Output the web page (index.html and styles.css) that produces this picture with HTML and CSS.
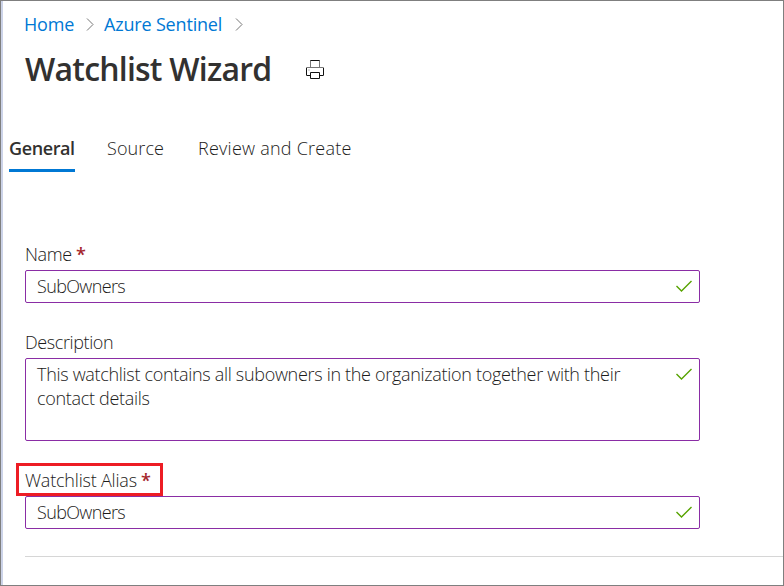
FILE: index.html
```html
<!DOCTYPE html>
<html lang="en">
<head>
<meta charset="utf-8">
<title>Watchlist Wizard</title>
<link rel="stylesheet" href="styles.css">
</head>
<body>
<main class="blade">
  <nav class="breadcrumb">
    <a class="crumb-home">Home</a>
    <svg class="chevron" width="8" height="13" viewBox="0 0 8 13"><path d="M1 .5 7 6.5 1 12.5"/></svg>
    <a class="crumb-sentinel">Azure Sentinel</a>
    <svg class="chevron" width="8" height="13" viewBox="0 0 8 13"><path d="M1 .5 7 6.5 1 12.5"/></svg>
  </nav>
  <header class="heading">
    <h1>Watchlist Wizard</h1>
    <svg class="printer" width="18" height="19" viewBox="0 0 18 19"><path class="soft" d="M4.500 7.500V.5h9v7M.5 15.500v-8h17v8"/><path d="M4.500.5h9M4.500 15.500h-4M17.500 15.500h-4M4.500 12.500h9v6h-9zM17.500 8v7M.5 8v7"/><path class="soft" d="M2.500 10h1"/></svg>
  </header>
  <div class="tabs">
    <a class="tab active">General</a>
    <a class="tab source">Source</a>
    <a class="tab review">Review and Create</a>
  </div>
  <form class="form">
    <div class="field">
      <div class="label"><span class="name">Name</span><b>*</b></div>
      <div class="box"><span class="value">SubOwners</span><svg class="check" width="16" height="12" viewBox="0 0 16 12"><path d="M.5 6 5.500 11 15.500 1"/></svg></div>
    </div>
    <div class="field">
      <div class="label"><span class="description">Description</span></div>
      <div class="box area"><span class="text">This watchlist contains all subowners in the organization together with their<br>contact details</span><svg class="check" width="16" height="12" viewBox="0 0 16 12"><path d="M.5 6 5.500 11 15.500 1"/></svg></div>
    </div>
    <div class="field">
      <div class="label marked"><span class="alias">Watchlist Alias</span><b>*</b></div>
      <div class="box"><span class="value">SubOwners</span><svg class="check" width="16" height="12" viewBox="0 0 16 12"><path d="M.5 6 5.500 11 15.500 1"/></svg></div>
    </div>
  </form>
  <hr>
</main>
</body>
</html>
```

FILE: styles.css
```css
* { box-sizing: border-box; }
body {
  margin: 0;
  background: #fff;
  color: #1c1b1a;
  font: 300 18px/24px "Open Sans", "Noto Sans", sans-serif;
}
.blade {
  width: 784px;
  height: 586px;
  overflow: hidden;
  border: 1px solid #7f7f7f;
  box-shadow: inset 2px 0 #ccd3e8;
}
span, a, h1 { white-space: nowrap; }
.breadcrumb {
  display: flex;
  align-items: center;
  height: 24px;
  margin: 11px 0 0 23px;
  color: #0078d4;
  font-weight: 400;
}
.crumb-home { width: 51px; letter-spacing: -.15px; }
.crumb-sentinel { width: 121px; margin-left: 10px; letter-spacing: -.18px; }
.chevron, .check, .printer { flex: none; fill: none; stroke-width: 1; }
.chevron { margin-left: 11px; stroke: #777; }
.crumb-sentinel + .chevron { margin-left: 10px; }
.heading {
  display: flex;
  align-items: center;
  height: 44px;
  margin: 11px 0 0 24px;
}
h1 { width: 281px; margin: 0; color: #323130; font-size: 32px; line-height: 44px; font-weight: 600; letter-spacing: -.78px; }
.printer { stroke: #111; }
.printer .soft { stroke: #777; }
.tabs {
  display: flex;
  height: 37px;
  margin: 44px 0 0 8px;
}
.tab { height: 37px; padding-top: 1px; }
.active { width: 66px; border-bottom: 3px solid #0078d4; color: #323130; font-weight: 600; letter-spacing: -.4px; }
.source { width: 58px; margin-left: 32px; letter-spacing: .1px; }
.review { margin-left: 33px; letter-spacing: .24px; }
.form { margin: 70px 0 0 24px; width: 675px; }
.field { margin-bottom: 27px; }
.label { display: flex; height: 28px; line-height: 24px; }
.label b { margin-left: 5px; color: #a4262c; font-weight: 600; }
.name { width: 46px; letter-spacing: -.4px; }
.description { letter-spacing: -.4px; }
.alias { width: 112px; letter-spacing: -.2px; }
.box {
  display: flex;
  justify-content: space-between;
  height: 33px;
  padding: 3px 7px 0 11px;
  border: 1px solid #8a2da5;
  border-radius: 2px;
}
.value { letter-spacing: -.65px; }
.text { letter-spacing: -.31px; }
.area { height: 83px; }
.check { margin-top: 6px; stroke: #57a300; stroke-width: 1.400; }
.marked {
  width: 147px;
  height: 33px;
  margin: -5px 0 0 -9px;
  padding-left: 6px;
  border: 3px solid #ed1c24;
  line-height: 28px;
}
.marked b { margin-left: 4px; }
hr { height: 1px; margin: 0 0 0 24px; border: 0; background: #d6d6d6; }
```
